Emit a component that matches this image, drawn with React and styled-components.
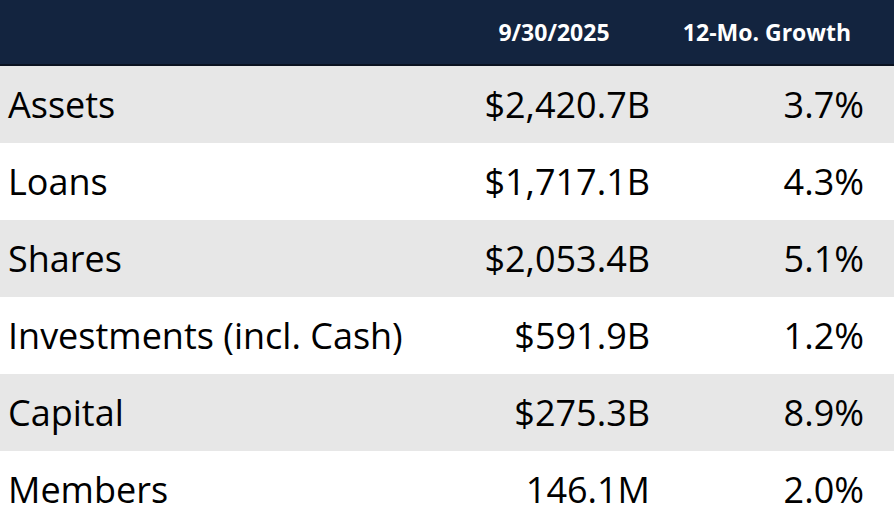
import React from 'react';
import styled, { createGlobalStyle } from 'styled-components';

const GlobalStyle = createGlobalStyle`
  html, body {
    margin: 0;
    padding: 0;
    background: #ffffff;
  }
  body {
    font-family: "Open Sans", "Noto Sans", "Liberation Sans", sans-serif;
    overflow: hidden;
  }
`;

const Table = styled.div`
  width: 894px;
  height: 522px;
  overflow: hidden;
  display: flex;
  flex-direction: column;
`;

const HeaderRow = styled.div`
  display: grid;
  grid-template-columns: 448px 212px 214px;
  height: 64px;
  background-color: #13243f;
  border-bottom: 2px solid #0a1220;
  align-items: center;
  flex-shrink: 0;
`;

const HeaderCell = styled.div`
  color: #ffffff;
  font-weight: 700;
  font-size: 23px;
  text-align: center;
  line-height: 1;
`;

const Row = styled.div`
  display: grid;
  grid-template-columns: 448px 212px 214px;
  height: 77px;
  align-items: center;
  flex-shrink: 0;
  background-color: ${props => (props.shaded ? '#e7e7e7' : '#ffffff')};
`;

const Label = styled.div`
  padding-left: 8px;
  font-size: 36px;
  line-height: 1;
  color: #000000;
  white-space: nowrap;
`;

const Value = styled.div`
  padding-right: 10px;
  text-align: right;
  font-size: 36px;
  line-height: 1;
  color: #000000;
  white-space: nowrap;
`;

const rows = [
  { label: 'Assets', value: '$2,420.7B', growth: '3.7%' },
  { label: 'Loans', value: '$1,717.1B', growth: '4.3%' },
  { label: 'Shares', value: '$2,053.4B', growth: '5.1%' },
  { label: 'Investments (incl. Cash)', value: '$591.9B', growth: '1.2%' },
  { label: 'Capital', value: '$275.3B', growth: '8.9%' },
  { label: 'Members', value: '146.1M', growth: '2.0%' },
];

function App() {
  return (
    <>
      <GlobalStyle />
      <Table>
        <HeaderRow>
          <HeaderCell />
          <HeaderCell>9/30/2025</HeaderCell>
          <HeaderCell>12-Mo. Growth</HeaderCell>
        </HeaderRow>
        {rows.map((row, i) => (
          <Row key={row.label} shaded={i % 2 === 0}>
            <Label>{row.label}</Label>
            <Value>{row.value}</Value>
            <Value>{row.growth}</Value>
          </Row>
        ))}
      </Table>
    </>
  );
}

export default App;
